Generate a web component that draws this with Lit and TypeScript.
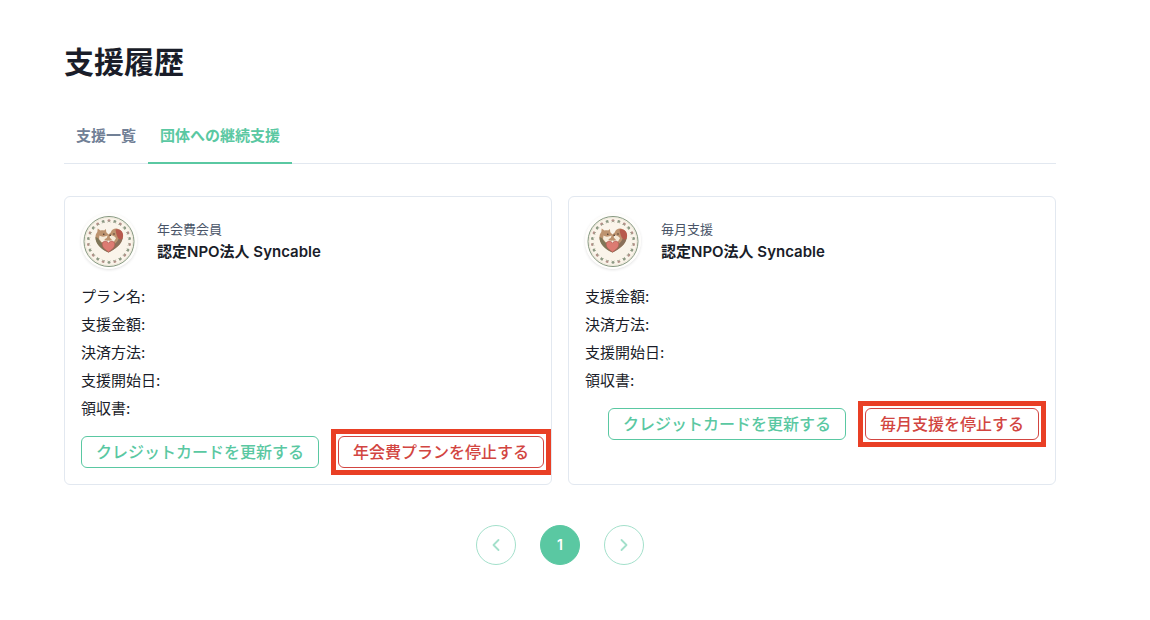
import { LitElement, html, svg, css } from "lit";
import { customElement, property, state } from "lit/decorators.js";

interface Support {
  kind: string;
  organization: string;
  fields: string[];
  stopLabel: string;
}

const SUPPORTS: Support[] = [
  {
    kind: "年会費会員",
    organization: "認定NPO法人 Syncable",
    fields: ["プラン名:", "支援金額:", "決済方法:", "支援開始日:", "領収書:"],
    stopLabel: "年会費プランを停止する",
  },
  {
    kind: "毎月支援",
    organization: "認定NPO法人 Syncable",
    fields: ["支援金額:", "決済方法:", "支援開始日:", "領収書:"],
    stopLabel: "毎月支援を停止する",
  },
];

const TABS = ["支援一覧", "団体への継続支援"];

/** Round emblem: a cat and a dog around a heart inside a floral wreath. */
@customElement("org-emblem")
export class OrgEmblem extends LitElement {
  static styles = css`
    :host {
      display: block;
      flex: none;
      width: 56px;
      height: 56px;
      border-radius: 50%;
      box-shadow: 0 1px 3px rgba(0, 0, 0, 0.12);
    }
    .emblem {
      display: block;
      width: 100%;
      height: 100%;
    }
  `;

  private wreath() {
    return Array.from({ length: 22 }, (_, i) => {
      const even = i % 2 === 0;
      return svg`<g transform="rotate(${(i * 360) / 22} 28 28.500)">
        <ellipse cx="28" cy="7.500" rx="1.500" ry="1.200" fill=${even ? "#b5918a" : "#8d9a85"} />
        <path d="M26.600 9.200 28 8.200l1.400 1" stroke="#8b977f" stroke-width=".6" fill="none" />
      </g>`;
    });
  }

  render() {
    return html`<svg class="emblem" viewBox="0 0 56 56" aria-hidden="true">
      <circle cx="28" cy="28" r="28" fill="#fefdfb" />
      <circle cx="28" cy="28.500" r="25" fill="#faf4ea" stroke="#84977f" stroke-width="1" />
      <circle cx="28" cy="28.500" r="23.800" fill="none" stroke="#e0ddca" stroke-width=".5" />
      ${this.wreath()}
      <path d="M27.500 39.500c-6.500-3-12.500-8-13-14.500-.2-2.500.6-4.600 1.800-6l.4-3.500 2.800 2c1.400-.5 2.600-.4 3.600 0l1.800-1.500.4 3.200 2.200 2.300 2.200-2c1-3 4.300-4.700 7.300-3.500 3.700 1.300 5.200 4.700 4.700 8.500-.8 6.500-7.200 11.500-14.200 15z" fill="#bd936f" />
      <path d="M14.500 24c-.4 6.500 5.500 12.500 13 15.500l-2-6.500c-3-1-6.500-4-8.500-8z" fill="#7f7658" />
      <path d="M41.700 25c-.8 6.300-7.200 11-14.200 14.500l3-6.500c3-1.200 6-4 7.500-8z" fill="#8a705a" />
      <path d="M18.500 22.500c2 1.700 5.200 1.300 8.200 0l-1 2.500-2.200 1.200 1.500 3.300-4.500-.5-2.500-3z" fill="#f6ebda" />
      <path d="M29 22.200c2.800-.2 5 1.200 6 3l-2.300 3.800-2.900.3 1-2.700-2-1.800z" fill="#f6ebda" />
      <path d="M34.500 16.500c4.800-1 8 2.400 7.600 6.700-.2 2.600-2 4.300-3.900 3-2-1.400-3-5.200-3.700-9.700z" fill="#b8594d" />
      <path d="M24 27c1.200.8 2.300 1 3.600.6 1 .5 2.200.2 3-.6l-.4 3-2.700 1.500-2.700-1.500z" fill="#fbf5eb" />
      <circle cx="22.800" cy="21.300" r=".7" fill="#3c2e28" />
      <circle cx="33" cy="21" r=".7" fill="#3c2e28" />
      <circle cx="29.200" cy="22.200" r=".8" fill="#3c2e28" />
      <path d="M27.500 39c-3.800-2.500-6.300-4.700-6.300-7.600 0-2 1.400-3.300 3.100-3.300 1.300 0 2.500.8 3.200 2.100.7-1.300 1.900-2.100 3.200-2.100 1.700 0 3.100 1.300 3.100 3.300 0 2.900-2.500 5.100-6.300 7.600z" fill="#dc7b72" stroke="#a8574f" stroke-width=".6" />
    </svg>`;
  }
}

@customElement("support-card")
export class SupportCard extends LitElement {
  @property({ attribute: false }) support!: Support;

  static styles = css`
    :host {
      display: block;
      box-sizing: border-box;
      min-width: 0;
      padding: 16px;
      border: 1px solid #e2e8f0;
      border-radius: 6px;
      background: #fff;
    }
    .header {
      display: flex;
      align-items: center;
      gap: 20px;
    }
    .kind {
      margin: 0;
      font-size: 13px;
      line-height: 22px;
      color: #4a5568;
    }
    .organization {
      margin: 0;
      font-size: 15px;
      font-weight: 600;
      line-height: 24px;
      color: #1a1d29;
    }
    .details {
      display: flex;
      flex-direction: column;
      gap: 8px;
      margin: 18px 0 17px;
      font-size: 15px;
      line-height: 20px;
    }
    .actions {
      display: flex;
      justify-content: safe flex-end;
      gap: 19px;
    }
    .action {
      position: relative;
      flex: none;
      box-sizing: border-box;
      height: 32px;
      padding: 0 14px;
      border: 1px solid currentColor;
      border-radius: 6px;
      background: #fff;
      font-family: inherit;
      font-size: 16px;
      font-weight: 500;
      line-height: 24px;
      white-space: nowrap;
      cursor: pointer;
    }
    .update {
      color: #5ac8a2;
    }
    .stop {
      color: #d24541;
    }
    .stop::after {
      content: "";
      position: absolute;
      inset: -8px;
      border: 5px solid #e93f25;
      pointer-events: none;
    }
  `;

  render() {
    const { kind, organization, fields, stopLabel } = this.support;
    return html`
      <header class="header">
        <org-emblem></org-emblem>
        <div>
          <p class="kind">${kind}</p>
          <h2 class="organization">${organization}</h2>
        </div>
      </header>
      <dl class="details">${fields.map((f) => html`<dt>${f}</dt>`)}</dl>
      <div class="actions">
        <button class="action update" type="button">クレジットカードを更新する</button>
        <button class="action stop" type="button">${stopLabel}</button>
      </div>
    `;
  }
}

@customElement("app-root")
export class AppRoot extends LitElement {
  @state() private activeTab = 1;

  static styles = css`
    :host {
      display: block;
      padding: 40px 94px 48px 64px;
      background: #fff;
      color: #1a1d29;
      font-family: Inter, "Noto Sans CJK JP", sans-serif;
    }
    .title {
      margin: 0;
      font-size: 30px;
      font-weight: 700;
      line-height: 44px;
    }
    .tabs {
      display: flex;
      margin: 24px 0 32px;
      box-shadow: inset 0 -1px #e2e8f0;
    }
    .tab {
      height: 56px;
      padding: 2px 12px 0;
      border: 0;
      border-bottom: 2px solid transparent;
      background: none;
      color: #718096;
      font-family: inherit;
      font-size: 15px;
      font-weight: 700;
      line-height: 24px;
      cursor: pointer;
    }
    .tab.active {
      border-bottom-color: #5ac8a2;
      color: #5ac8a2;
    }
    .cards {
      display: grid;
      grid-template-columns: repeat(2, minmax(0, 1fr));
      gap: 16px;
    }
    .pagination {
      display: flex;
      justify-content: center;
      gap: 24px;
      margin-top: 40px;
    }
    .page {
      display: grid;
      place-items: center;
      box-sizing: border-box;
      width: 40px;
      height: 40px;
      padding: 0;
      border: 1px solid #5ac8a2;
      border-radius: 50%;
      background: #fff;
      color: #5ac8a2;
      font-family: inherit;
      font-size: 14px;
      font-weight: 600;
      line-height: 20px;
    }
    .page:disabled {
      opacity: 0.55;
    }
    .page.current {
      background: #5ac8a2;
      color: #fff;
    }
    .chevron {
      width: 16px;
      height: 16px;
      fill: none;
      stroke: currentColor;
      stroke-width: 1.8;
      stroke-linecap: round;
      stroke-linejoin: round;
    }
  `;

  render() {
    return html`
      <main>
        <h1 class="title">支援履歴</h1>
        <div class="tabs" role="tablist">
          ${TABS.map(
            (label, i) => html`<button
              class="tab ${i === this.activeTab ? "active" : ""}"
              type="button"
              role="tab"
              aria-selected=${i === this.activeTab ? "true" : "false"}
              @click=${() => (this.activeTab = i)}
            >${label}</button>`
          )}
        </div>
        <section class="cards">
          ${SUPPORTS.map((s) => html`<support-card .support=${s}></support-card>`)}
        </section>
        <nav class="pagination">
          <button class="page" type="button" aria-label="前へ" disabled>
            <svg class="chevron" viewBox="0 0 16 16"><path d="M10.500 3 5.500 8l5 5" /></svg>
          </button>
          <button class="page current" type="button" aria-current="page">1</button>
          <button class="page" type="button" aria-label="次へ" disabled>
            <svg class="chevron" viewBox="0 0 16 16"><path d="M5.500 3l5 5-5 5" /></svg>
          </button>
        </nav>
      </main>
    `;
  }
}
